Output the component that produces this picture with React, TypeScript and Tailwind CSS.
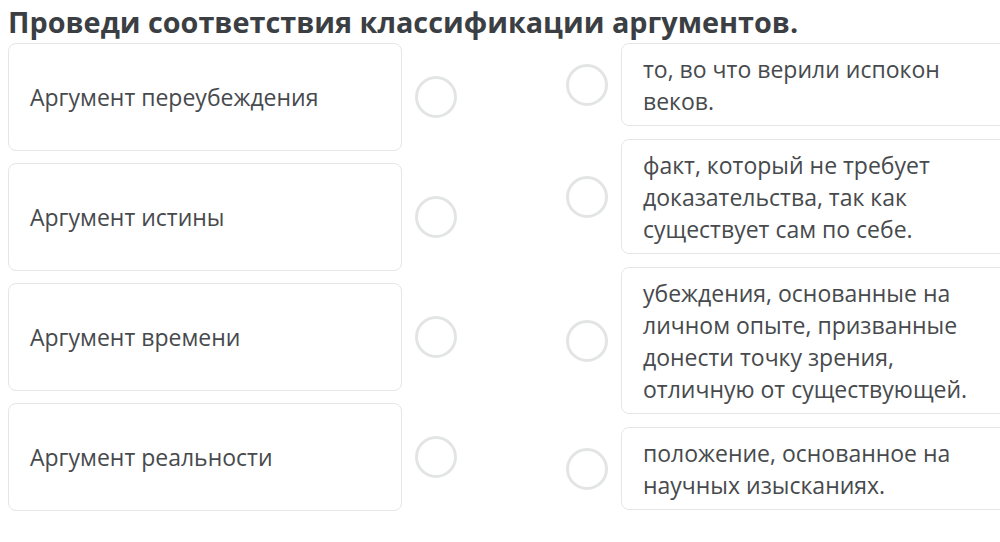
import React from "react";

const left = [
  "Аргумент переубеждения",
  "Аргумент истины",
  "Аргумент времени",
  "Аргумент реальности",
];

const right = [
  "то, во что верили испокон веков.",
  "факт, который не требует доказательства, так как существует сам по себе.",
  "убеждения, основанные на личном опыте, призванные донести точку зрения, отличную от существующей.",
  "положение, основанное на научных изысканиях.",
];

function Circle() {
  return <div className="w-[42px] h-[42px] rounded-full border-[3px] border-[#e3e5e5] shrink-0" />;
}

export default function App() {
  return (
    <div
      className="w-[1000px] h-[542px] overflow-hidden bg-white relative"
      style={{ fontFamily: '"Open Sans", "Noto Sans", sans-serif' }}
    >
      <h1 className="absolute left-[8px] top-[0px] text-[28.8px] leading-[44px] font-bold text-[#3b3f44] whitespace-nowrap">
        Проведи соответствия классификации аргументов.
      </h1>
      <div className="pt-[43px] pl-[8px] flex">
        <div className="flex flex-col gap-[12px] w-[394px] shrink-0">
          {left.map((t) => (
            <div
              key={t}
              className="h-[108px] flex items-center border border-[#e6e6e6] rounded-[8px] px-[21px] text-[23px] text-[#474a4d]"
            >
              {t}
            </div>
          ))}
        </div>
        <div className="flex flex-col gap-[12px] ml-[13px]">
          {left.map((t) => (
            <div key={t} className="h-[108px] flex items-center">
              <Circle />
            </div>
          ))}
        </div>
        <div className="flex flex-col gap-[13px] ml-[109px]">
          {right.map((t) => (
            <div key={t} className="flex items-center gap-[13px]">
              <Circle />
              <div className="w-[394px] shrink-0 border border-[#e6e6e6] rounded-[8px] px-[21px] py-[8.5px] text-[23px] leading-[32px] text-[#474a4d]">
                {t}
              </div>
            </div>
          ))}
        </div>
      </div>
    </div>
  );
}
